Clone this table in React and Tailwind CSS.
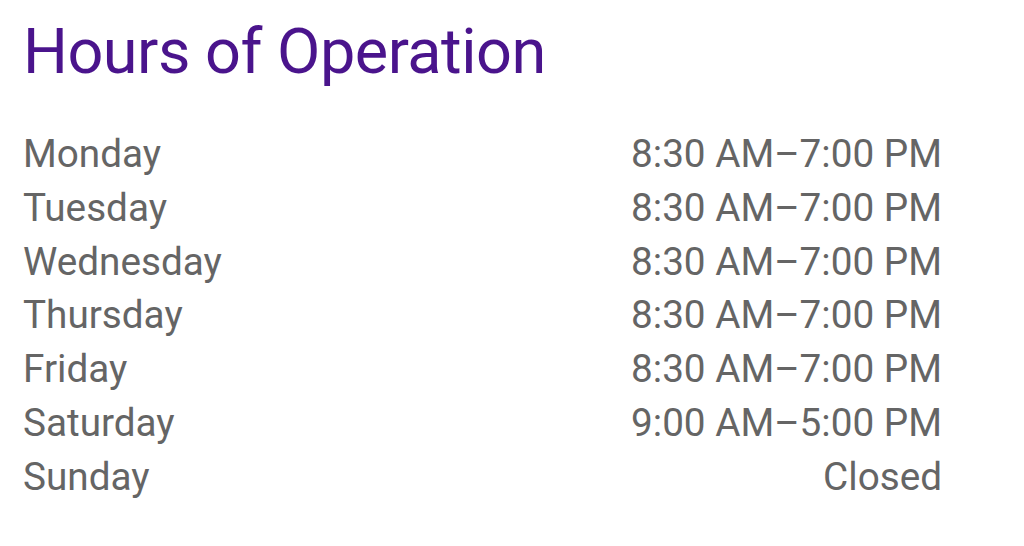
const hours = [
  { day: 'Monday', time: '8:30 AM–7:00 PM' },
  { day: 'Tuesday', time: '8:30 AM–7:00 PM' },
  { day: 'Wednesday', time: '8:30 AM–7:00 PM' },
  { day: 'Thursday', time: '8:30 AM–7:00 PM' },
  { day: 'Friday', time: '8:30 AM–7:00 PM' },
  { day: 'Saturday', time: '9:00 AM–5:00 PM' },
  { day: 'Sunday', time: 'Closed' },
];

export default function App() {
  return (
    <div className="w-[1024px] h-[546px] bg-white pl-[23px] pt-[14px] font-['Roboto',sans-serif] overflow-hidden">
      <h1 className="text-[63px] leading-[75px] tracking-[-0.5px] text-[#4a148c] font-normal">Hours of Operation</h1>
      <div className="mt-[38px] w-[919px]">
        {hours.map(h => (
          <div key={h.day} className="flex justify-between text-[38.7px] leading-[53.8px] text-[#656565]">
            <span>{h.day}</span>
            <span>{h.time}</span>
          </div>
        ))}
      </div>
    </div>
  );
}
